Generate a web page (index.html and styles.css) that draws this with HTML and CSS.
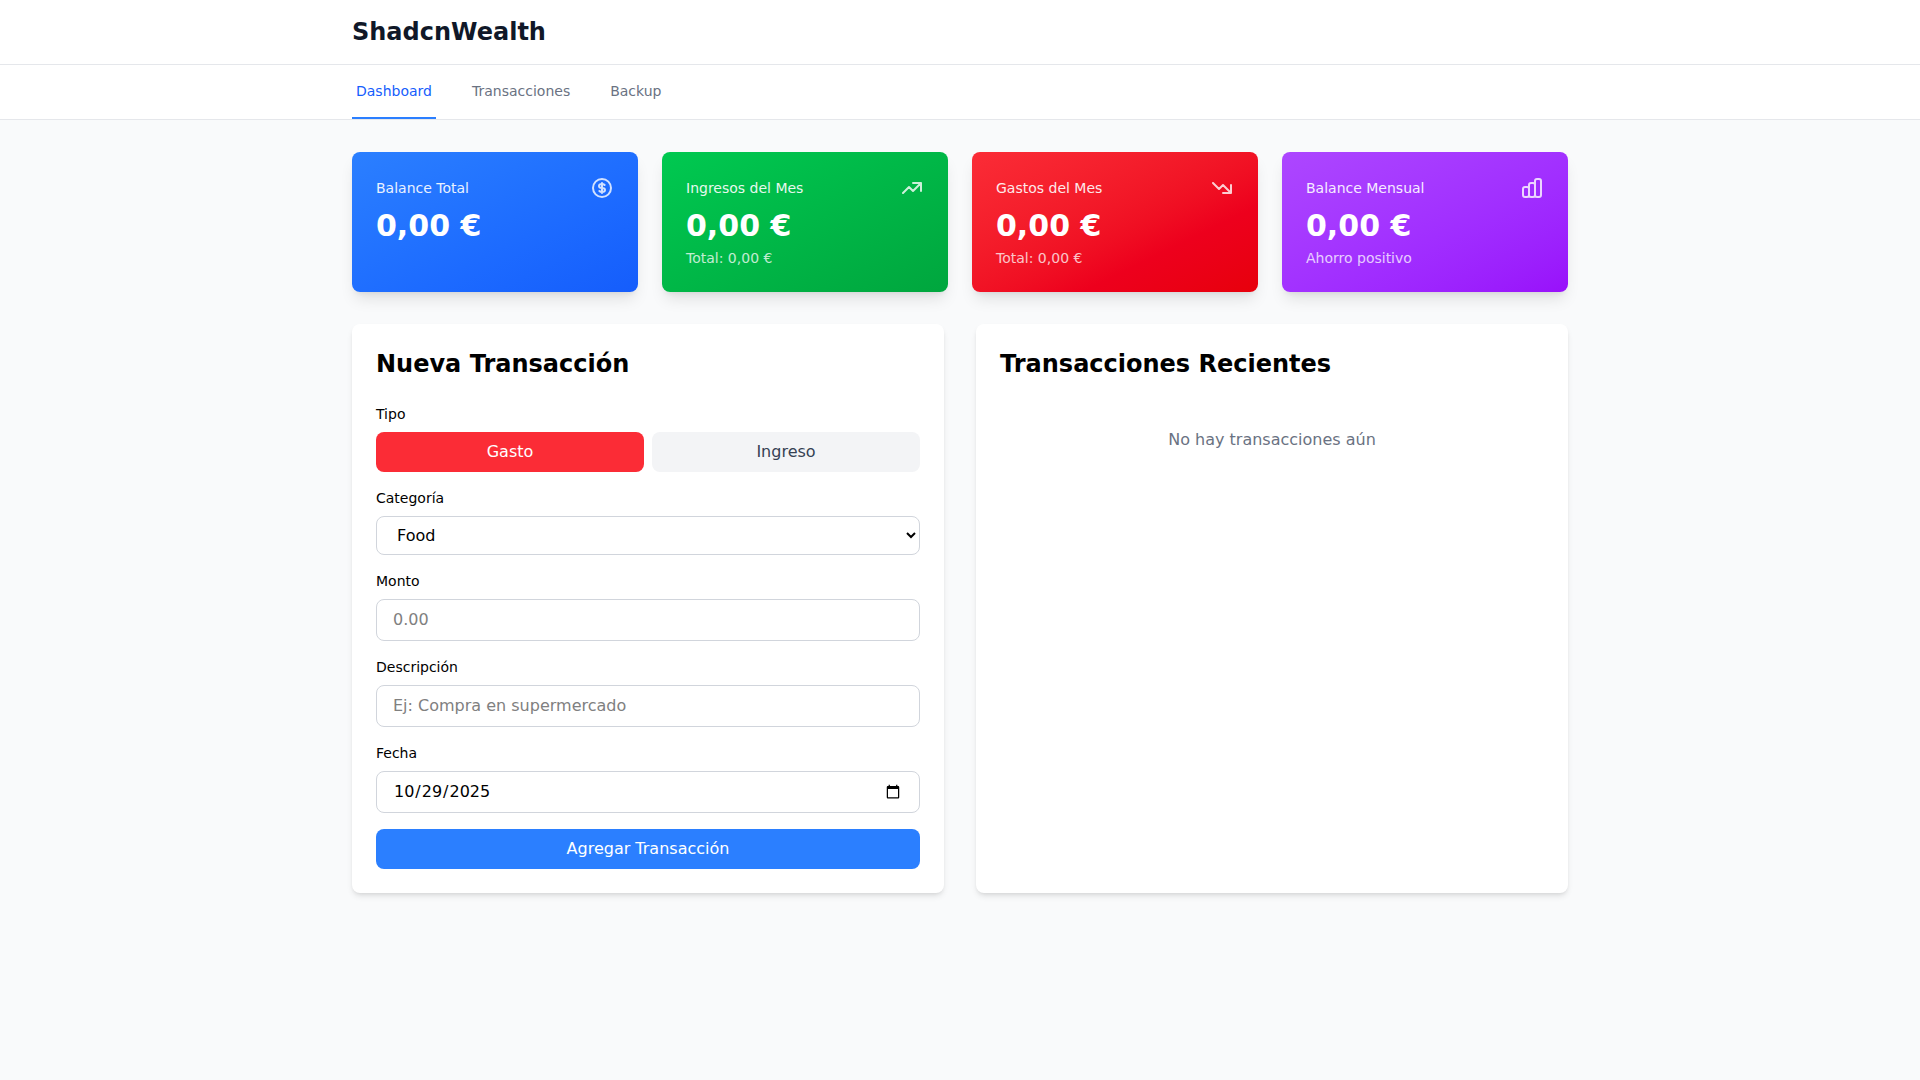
FILE: index.html
```html
<!DOCTYPE html>
<html lang="es">
<head>
    <meta charset="UTF-8">
    <meta name="viewport" content="width=device-width, initial-scale=1.0">
    <title>ShadcnWealth</title>
    <link rel="stylesheet" href="styles.css">
</head>
<body>
    <header class="header">
        <div class="container">
            <h1>ShadcnWealth</h1>
        </div>
    </header>

    <nav class="nav">
        <div class="container tabs">
            <a href="#dashboard" class="tab active">Dashboard</a>
            <a href="#transacciones" class="tab">Transacciones</a>
            <a href="#backup" class="tab">Backup</a>
        </div>
    </nav>

    <main class="container main">
        <section class="stats">
            <div class="stat blue">
                <div class="stat-head">
                    <h3>Balance Total</h3>
                    <svg class="icon" viewBox="0 0 24 24"><path d="M12 8c-1.657 0-3 .895-3 2s1.343 2 3 2 3 .895 3 2-1.343 2-3 2m0-8c1.11 0 2.08.402 2.599 1M12 8V7m0 1v8m0 0v1m0-1c-1.11 0-2.08-.402-2.599-1M21 12a9 9 0 11-18 0 9 9 0 0118 0z"/></svg>
                </div>
                <p class="amount">0,00 €</p>
            </div>
            <div class="stat green">
                <div class="stat-head">
                    <h3>Ingresos del Mes</h3>
                    <svg class="icon" viewBox="0 0 24 24"><path d="M13 7h8m0 0v8m0-8l-8 8-4-4-6 6"/></svg>
                </div>
                <p class="amount">0,00 €</p>
                <p class="note">Total: 0,00 €</p>
            </div>
            <div class="stat red">
                <div class="stat-head">
                    <h3>Gastos del Mes</h3>
                    <svg class="icon" viewBox="0 0 24 24"><path d="M13 17h8m0 0V9m0 8l-8-8-4 4-6-6"/></svg>
                </div>
                <p class="amount">0,00 €</p>
                <p class="note">Total: 0,00 €</p>
            </div>
            <div class="stat purple">
                <div class="stat-head">
                    <h3>Balance Mensual</h3>
                    <svg class="icon" viewBox="0 0 24 24"><path d="M9 19v-6a2 2 0 00-2-2H5a2 2 0 00-2 2v6a2 2 0 002 2h2a2 2 0 002-2zm0 0V9a2 2 0 012-2h2a2 2 0 012 2v10m-6 0a2 2 0 002 2h2a2 2 0 002-2m0 0V5a2 2 0 012-2h2a2 2 0 012 2v14a2 2 0 01-2 2h-2a2 2 0 01-2-2z"/></svg>
                </div>
                <p class="amount">0,00 €</p>
                <p class="note">Ahorro positivo</p>
            </div>
        </section>

        <div class="panels">
            <section class="panel">
                <h2>Nueva Transacción</h2>
                <form class="form">
                    <div class="field" role="group" aria-labelledby="tipo">
                        <span class="label" id="tipo">Tipo</span>
                        <div class="types">
                            <button type="button" class="btn expense">Gasto</button>
                            <button type="button" class="btn">Ingreso</button>
                        </div>
                    </div>
                    <div class="field">
                        <label class="label" for="categoria">Categoría</label>
                        <select class="control" id="categoria">
                            <option>Food</option>
                        </select>
                    </div>
                    <div class="field">
                        <label class="label" for="monto">Monto</label>
                        <input class="control" type="number" step="0.01" id="monto" placeholder="0.00">
                    </div>
                    <div class="field">
                        <label class="label" for="descripcion">Descripción</label>
                        <input class="control" type="text" id="descripcion" placeholder="Ej: Compra en supermercado">
                    </div>
                    <div class="field">
                        <label class="label" for="fecha">Fecha</label>
                        <input class="control" type="date" id="fecha" value="2025-10-29">
                    </div>
                    <button type="submit" class="btn submit">Agregar Transacción</button>
                </form>
            </section>

            <section class="panel">
                <h2>Transacciones Recientes</h2>
                <p class="empty">No hay transacciones aún</p>
            </section>
        </div>
    </main>
</body>
</html>
```
FILE: styles.css
```css
* {
    box-sizing: border-box;
    margin: 0;
    padding: 0;
}

body {
    font-family: 'DejaVu Sans', sans-serif;
    font-size: 16px;
    line-height: 24px;
    color: #000;
    background-color: #f9fafb;
    min-height: 100vh;
}

.container {
    max-width: 1280px;
    margin: 0 auto;
    padding: 0 32px;
}

/* Header and tabs */
.header {
    background-color: #fff;
    border-bottom: 1px solid #e5e7eb;
}

.header .container {
    padding-top: 16px;
    padding-bottom: 16px;
}

h1 {
    font-size: 24px;
    line-height: 32px;
    color: #101828;
}

.nav {
    background-color: #fff;
    border-bottom: 1px solid #e5e7eb;
}

.tabs {
    display: flex;
    gap: 32px;
}

.tab {
    padding: 16px 4px;
    font-size: 14px;
    line-height: 20px;
    color: #6a7282;
    text-decoration: none;
    border-bottom: 2px solid transparent;
}

.tab:hover {
    color: #364153;
}

.tab.active {
    color: #155dfc;
    border-bottom-color: #2b7fff;
}

.main {
    display: flex;
    flex-direction: column;
    gap: 32px;
    padding-top: 32px;
    padding-bottom: 32px;
}

/* Summary cards */
.stats {
    display: grid;
    grid-template-columns: repeat(4, 1fr);
    gap: 24px;
}

.stat {
    padding: 24px;
    color: #fff;
    border-radius: 8px;
    box-shadow: 0 10px 15px -3px rgba(0, 0, 0, 0.1), 0 4px 6px -4px rgba(0, 0, 0, 0.1);
}

.blue {
    background: linear-gradient(to bottom right in oklab, oklch(62.3% 0.214 259.815), oklch(54.6% 0.245 262.881));
}

.green {
    background: linear-gradient(to bottom right in oklab, oklch(72.3% 0.219 149.579), oklch(62.7% 0.194 149.214));
}

.red {
    background: linear-gradient(to bottom right in oklab, oklch(63.7% 0.237 25.331), oklch(57.7% 0.245 27.325));
}

.purple {
    background: linear-gradient(to bottom right in oklab, oklch(62.7% 0.265 303.9), oklch(55.8% 0.288 302.321));
}

.stat-head {
    display: flex;
    justify-content: space-between;
    align-items: center;
    margin-bottom: 8px;
}

.stat h3 {
    font-size: 14px;
    line-height: 20px;
    font-weight: normal;
    opacity: 0.9;
}

.icon {
    width: 24px;
    height: 24px;
    fill: none;
    stroke: currentColor;
    stroke-width: 2;
    stroke-linecap: round;
    stroke-linejoin: round;
    opacity: 0.8;
}

.amount {
    font-size: 30px;
    line-height: 36px;
    font-weight: bold;
}

.note {
    margin-top: 4px;
    font-size: 14px;
    line-height: 20px;
    opacity: 0.75;
}

/* Form and recent list */
.panels {
    display: grid;
    grid-template-columns: repeat(2, 1fr);
    gap: 32px;
}

.panel {
    padding: 24px;
    background-color: #fff;
    border-radius: 8px;
    box-shadow: 0 4px 6px -1px rgba(0, 0, 0, 0.1), 0 2px 4px -2px rgba(0, 0, 0, 0.1);
}

h2 {
    font-size: 24px;
    line-height: 32px;
    margin-bottom: 24px;
}

.form {
    display: flex;
    flex-direction: column;
    gap: 16px;
}

.label {
    display: block;
    margin-bottom: 8px;
    font-size: 14px;
    line-height: 20px;
}

.types {
    display: flex;
    gap: 8px;
}

.btn {
    flex: 1;
    padding: 8px 16px;
    font: inherit;
    color: #364153;
    background-color: #f3f4f6;
    border: none;
    border-radius: 8px;
    cursor: pointer;
}

.btn.expense {
    color: #fff;
    background-color: #fb2c36;
}

.btn.submit {
    color: #fff;
    background-color: #2b7fff;
}

.btn.submit:hover {
    background-color: #155dfc;
}

.control {
    display: block;
    width: 100%;
    padding: 8px 16px;
    font: inherit;
    color: #000;
    background-color: #fff;
    border: 1px solid #d1d5dc;
    border-radius: 8px;
}

.control::placeholder {
    color: #808080;
}

/* keeps the date field as tall as the other inputs */
.control::-webkit-datetime-edit,
.control::-webkit-datetime-edit-fields-wrapper {
    padding: 0;
}

.empty {
    padding: 24px 0;
    text-align: center;
    color: #6a7282;
}

@media (max-width: 900px) {
    .stats {
        grid-template-columns: repeat(2, 1fr);
    }

    .panels {
        grid-template-columns: 1fr;
    }
}
```
